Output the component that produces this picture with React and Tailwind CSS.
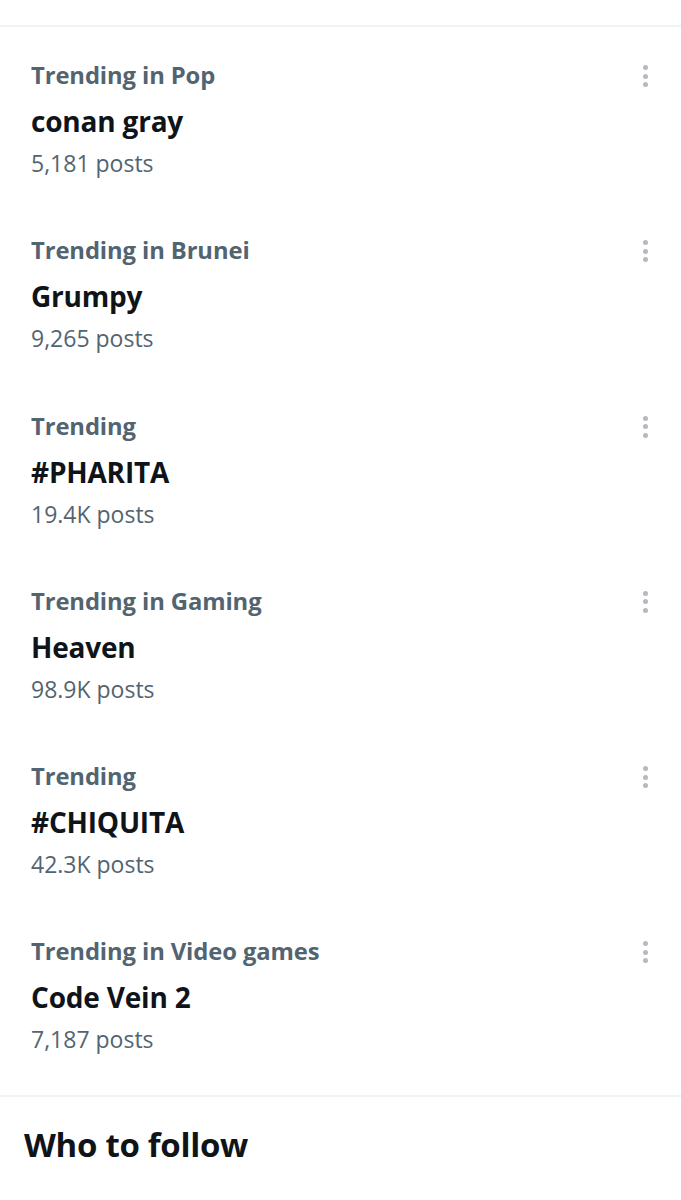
const trends = [
  { label: 'Trending in Pop', name: 'conan gray', posts: '5,181 posts' },
  { label: 'Trending in Brunei', name: 'Grumpy', posts: '9,265 posts' },
  { label: 'Trending', name: '#PHARITA', posts: '19.4K posts' },
  { label: 'Trending in Gaming', name: 'Heaven', posts: '98.9K posts' },
  { label: 'Trending', name: '#CHIQUITA', posts: '42.3K posts' },
  { label: 'Trending in Video games', name: 'Code Vein 2', posts: '7,187 posts' },
];

function Dots() {
  return (
    <div className="flex flex-col items-center gap-[3.5px] pt-[4px]">
      <span className="w-[5px] h-[5px] rounded-full bg-[#b4bac0]" />
      <span className="w-[5px] h-[5px] rounded-full bg-[#b4bac0]" />
      <span className="w-[5px] h-[5px] rounded-full bg-[#b4bac0]" />
    </div>
  );
}

export default function App() {
  return (
    <div className="w-[681px] h-[1200px] bg-white overflow-hidden" style={{ fontFamily: '"Open Sans", "Noto Sans", sans-serif' }}>
      <div className="h-[25px]" />
      <div className="border-t-2 border-[#eff3f4]">
        <div className="flex flex-col gap-[59.3px] pt-[34px] pb-[42px]">
          {trends.map((t, i) => (
            <div key={i} className="flex justify-between pl-[31px] pr-[33px]">
              <div className="flex flex-col">
                <div className="text-[23.8px] leading-[28px] font-bold text-[#536471] tracking-[-0.1px]">{t.label}</div>
                <div className="text-[28px] leading-[32px] font-bold text-[#0f1419] mt-[16px] tracking-[-0.2px]">{t.name}</div>
                <div className="text-[23px] leading-[28px] text-[#536471] mt-[12px]">{t.posts}</div>
              </div>
              <Dots />
            </div>
          ))}
        </div>
      </div>
      <div className="border-t-2 border-[#eff3f4] pl-[24px] pt-[28px]">
        <div className="text-[33px] leading-[40px] font-bold text-[#0f1419] tracking-[-0.3px]">Who to follow</div>
      </div>
    </div>
  );
}
